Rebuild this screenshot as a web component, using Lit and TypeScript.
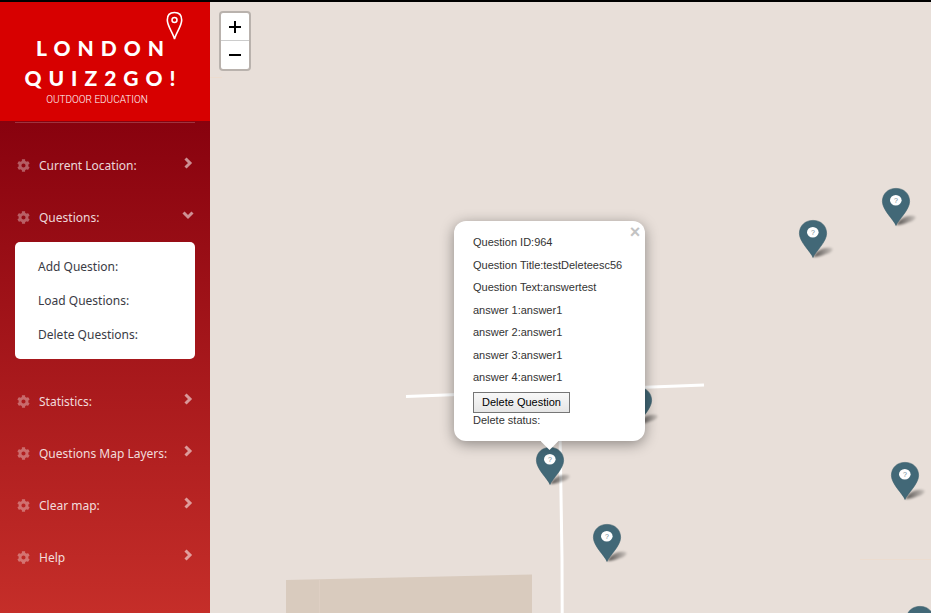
import { LitElement, html, css, svg } from "lit";
import { customElement, property, state } from "lit/decorators.js";

@customElement("map-pin")
class MapPin extends LitElement {
  static styles = css`
    :host { display: block; width: 48px; height: 42px; }
    svg { display: block; overflow: visible; }
    text { font: 7px "Liberation Sans", Arial, sans-serif; fill: #6d8791; }
    .shade { filter: blur(1px); }
  `;
  @property({ type: Boolean }) plain = false;

  render() {
    return html`<svg width="48" height="42" viewBox="0 0 48 42" role="img" aria-label="Question marker">
      <defs>
        <linearGradient id="s" x1="0" x2="1"><stop offset="0" stop-color="#000" stop-opacity=".65"/><stop offset="1" stop-color="#000" stop-opacity=".12"/></linearGradient>
      </defs>
      <path class="shade" fill="url(#s)" d="M14 37 L18 32 C22 28 29 27 32 28 C36 29 32 33 27 34 C23 36 18 37 14 37Z"/>
      <path fill="#426877" stroke="#385c6a" stroke-width=".6" d="M14 37.500 C12 32 .4 22 .4 13.500 C.4 5.800 6 .4 14 .4 S27.600 5.800 27.600 13.500 C27.600 22 16 32 14 37.500Z"/>
      <ellipse cx="13.800" cy="12.300" rx="5.800" ry="5.300" fill="#fff"/>
      ${this.plain ? "" : svg`<text x="14" y="15" text-anchor="middle">?</text>`}
    </svg>`;
  }
}

const cog = svg`<path fill="currentColor" d="M487.400 315.700l-42.600-24.600c4.300-23.200 4.300-47 0-70.200l42.600-24.600c4.900-2.800 7.100-8.600 5.500-14-11.100-35.600-30-67.800-54.700-94.600-3.800-4.100-10-5.100-14.800-2.300L380.800 110c-17.900-15.400-38.500-27.300-60.800-35.100V25.800c0-5.600-3.900-10.500-9.400-11.700-36.700-8.200-74.300-7.800-109.200 0-5.500 1.200-9.400 6.100-9.400 11.700V75c-22.200 7.900-42.800 19.800-60.800 35.100L88.700 85.500c-4.900-2.800-11-1.900-14.800 2.300-24.700 26.700-43.600 58.900-54.700 94.600-1.700 5.400.6 11.200 5.500 14L67.300 221c-4.300 23.200-4.300 47 0 70.200l-42.600 24.600c-4.900 2.800-7.100 8.600-5.500 14 11.100 35.600 30 67.800 54.700 94.600 3.800 4.100 10 5.100 14.800 2.300l42.600-24.600c17.900 15.400 38.500 27.300 60.800 35.100v49.200c0 5.600 3.900 10.500 9.400 11.700 36.700 8.200 74.300 7.800 109.200 0 5.500-1.200 9.400-6.100 9.400-11.700v-49.200c22.200-7.900 42.800-19.800 60.800-35.100l42.600 24.600c4.900 2.800 11 1.900 14.800-2.300 24.700-26.700 43.600-58.900 54.700-94.600 1.500-5.500-.7-11.300-5.600-14.100zM256 336c-44.100 0-80-35.900-80-80s35.900-80 80-80 80 35.900 80 80-35.900 80-80 80z"/>`;

@customElement("quiz-sidebar")
class QuizSidebar extends LitElement {
  static styles = css`
    :host {
      display: flex; flex-direction: column; width: 210px; flex: none;
      font-family: "Noto Sans", "Open Sans", sans-serif; font-size: 12px;
      background: linear-gradient(#86000d 100px, #c52e29);
    }
    .brand {
      position: relative; box-sizing: border-box; height: 119px; padding-top: 31px;
      background: #d70000; color: #fff; text-decoration: none;
      display: flex; flex-direction: column; align-items: center;
    }
    .word { font: 900 21px/30px Lato, sans-serif; white-space: nowrap; letter-spacing: 7px; margin-right: 3px; }
    .tag { font: 300 10px/14px Roboto, sans-serif; margin-right: 16px; }
    .logo-pin { position: absolute; left: 166px; top: 9px; }
    hr { width: 180px; height: 1px; border: 0; margin: 1px 15px 16px; background: rgba(255,255,255,.2); }
    .nav {
      display: flex; align-items: center; width: 100%; height: 52px; padding: 0 16px 0 17px;
      border: 0; background: none; color: rgba(255,255,255,.85); font: inherit; text-align: left; cursor: pointer;
    }
    .gear { width: 13px; height: 13px; color: rgba(255,255,255,.35); margin-right: 9px; }
    .label { flex: 1; white-space: nowrap; }
    .chev { width: 12px; height: 12px; color: rgba(255,255,255,.55); margin-bottom: 4px; }
    .chev path { fill: none; stroke: currentColor; stroke-width: 3; }
    .sub {
      display: flex; flex-direction: column; margin: -1px 15px 16px; padding: 8px 0 7px;
      background: #fff; border-radius: 5px;
    }
    .sub a { padding-left: 23px; line-height: 34px; color: #3a3b45; text-decoration: none; }
  `;
  @state() open = "Questions:";

  toggle(name: string) {
    this.open = this.open === name ? "" : name;
  }

  item(name: string, links: string[] = []) {
    const open = this.open === name;
    return html`
      <button class="nav" aria-expanded=${open} @click=${() => this.toggle(name)}>
        <svg class="gear" viewBox="0 0 512 512">${cog}</svg>
        <span class="label">${name}</span>
        <svg class="chev" viewBox="0 0 12 12"><path d=${open ? "M1.500 3.500 L6 8 L10.500 3.500" : "M3.500 1.500 L8 6 L3.500 10.500"} /></svg>
      </button>
      ${open && links.length ? html`<div class="sub">${links.map((l) => html`<a href="#">${l}</a>`)}</div>` : ""}
    `;
  }

  render() {
    return html`
      <a class="brand" href="#">
        <span class="word">LONDON</span>
        <span class="word">QUIZ2GO!</span>
        <span class="tag">OUTDOOR EDUCATION</span>
        <svg class="logo-pin" width="17" height="30" viewBox="0 0 17 30" fill="none" stroke="#fff">
          <path stroke-width="1.600" d="M8.500 28 C7 22 1.300 15 1.300 9 C1.300 4 3.500 1.500 8.500 1.500 S15.700 4 15.700 9 C15.700 15 10 22 8.500 28Z" />
          <circle cx="8.500" cy="9" r="2.500" stroke-width="1.500" />
        </svg>
      </a>
      <hr />
      <nav>
        ${this.item("Current Location:")}
        ${this.item("Questions:", ["Add Question:", "Load Questions:", "Delete Questions:"])}
        ${this.item("Statistics:")} ${this.item("Questions Map Layers:")}
        ${this.item("Clear map:")} ${this.item("Help")}
      </nav>
    `;
  }
}

@customElement("question-popup")
class QuestionPopup extends LitElement {
  static styles = css`
    :host { display: block; width: 191px; font: 11px/15px "Liberation Sans", Arial, sans-serif; color: #333; }
    .box {
      position: relative; height: 220px; box-sizing: border-box; padding: 14px 19px;
      background: #fff; border-radius: 12px; box-shadow: 0 3px 14px rgba(0,0,0,.4);
    }
    .facts { display: flex; flex-direction: column; justify-content: space-between; height: 150px; }
    p { margin: 0; white-space: nowrap; }
    .delete {
      display: block; width: 97px; height: 21px; margin-top: 7px; padding: 0; white-space: nowrap;
      border: 1px solid #767676; background: linear-gradient(#f8f8f8, #e6e6e6); color: #000; font: inherit;
    }
    .close {
      position: absolute; top: 4px; right: 2px; width: 16px; height: 14px; padding: 0; border: 0;
      background: none; color: #c3c3c3; font: bold 18px/14px "Liberation Sans", Arial, sans-serif;
    }
    .tip { display: block; margin: 0 auto; width: 18px; height: 9px; background: #fff; clip-path: polygon(0 0, 100% 0, 50% 100%); position: relative; }
  `;
  render() {
    const facts = [
      "Question ID:964", "Question Title:testDeleteesc56", "Question Text:answertest",
      "answer 1:answer1", "answer 2:answer1", "answer 3:answer1", "answer 4:answer1",
    ];
    return html`
      <div class="box">
        <button class="close" aria-label="Close popup">×</button>
        <div class="facts">${facts.map((f) => html`<p>${f}</p>`)}</div>
        <button class="delete">Delete Question</button>
        <p>Delete status:</p>
      </div>
      <span class="tip"></span>
    `;
  }
}

@customElement("quiz-map")
class QuizMap extends LitElement {
  static styles = css`
    :host { display: block; position: relative; flex: 1; min-width: 0; overflow: hidden; background: #e8dfd9; }
    .ground { position: absolute; inset: 0; width: 100%; height: 100%; }
    .zoom {
      position: absolute; left: 9px; top: 9px; width: 28px; border: 2px solid rgba(0,0,0,.2);
      border-radius: 4px; background: #fff; background-clip: padding-box;
    }
    .zoom button { display: flex; align-items: center; justify-content: center; width: 28px; height: 27px; padding: 0; border: 0; background: none; }
    .zoom button + button { height: 29px; border-top: 1px solid #ccc; }
    map-pin, question-popup { position: absolute; }
    question-popup { left: 244px; top: 219px; }
  `;
  @property({ attribute: false }) pins = [
    { x: 672, y: 186 }, { x: 589, y: 218 }, { x: 414, y: 385 }, { x: 326, y: 445 },
    { x: 681, y: 460 }, { x: 383, y: 522 }, { x: 696, y: 604, plain: true },
  ];
  render() {
    return html`
      <svg class="ground" aria-hidden="true">
        <path d="M0 75.500H12M650 557.500H721" stroke="#ecdccf" />
        <path d="M76 578 L322 572.500 V700 H76Z" fill="#d9cbbe" />
        <path d="M109.500 578 V700" stroke="#decfc3" />
        <path d="M196 394.500 L494 383" stroke="#fff" stroke-width="3" fill="none" />
        <path d="M350 430 L352 556 L352.500 700" stroke="#fff" stroke-width="3" fill="none" />
      </svg>
      ${this.pins.map((p) => html`<map-pin ?plain=${p.plain} style="left:${p.x}px;top:${p.y}px"></map-pin>`)}
      <question-popup></question-popup>
      <div class="zoom">
        <button aria-label="Zoom in"><svg width="12" height="12"><path d="M6 0V12M0 6H12" stroke="#000" stroke-width="2" /></svg></button>
        <button aria-label="Zoom out"><svg width="12" height="12"><path d="M0 6H12" stroke="#000" stroke-width="2" /></svg></button>
      </div>
    `;
  }
}

@customElement("app-root")
class AppRoot extends LitElement {
  static styles = css`
    :host { display: flex; box-sizing: border-box; height: 100vh; overflow: hidden; border-top: 2px solid #000; }
  `;
  render() {
    return html`<quiz-sidebar></quiz-sidebar><quiz-map></quiz-map>`;
  }
}
